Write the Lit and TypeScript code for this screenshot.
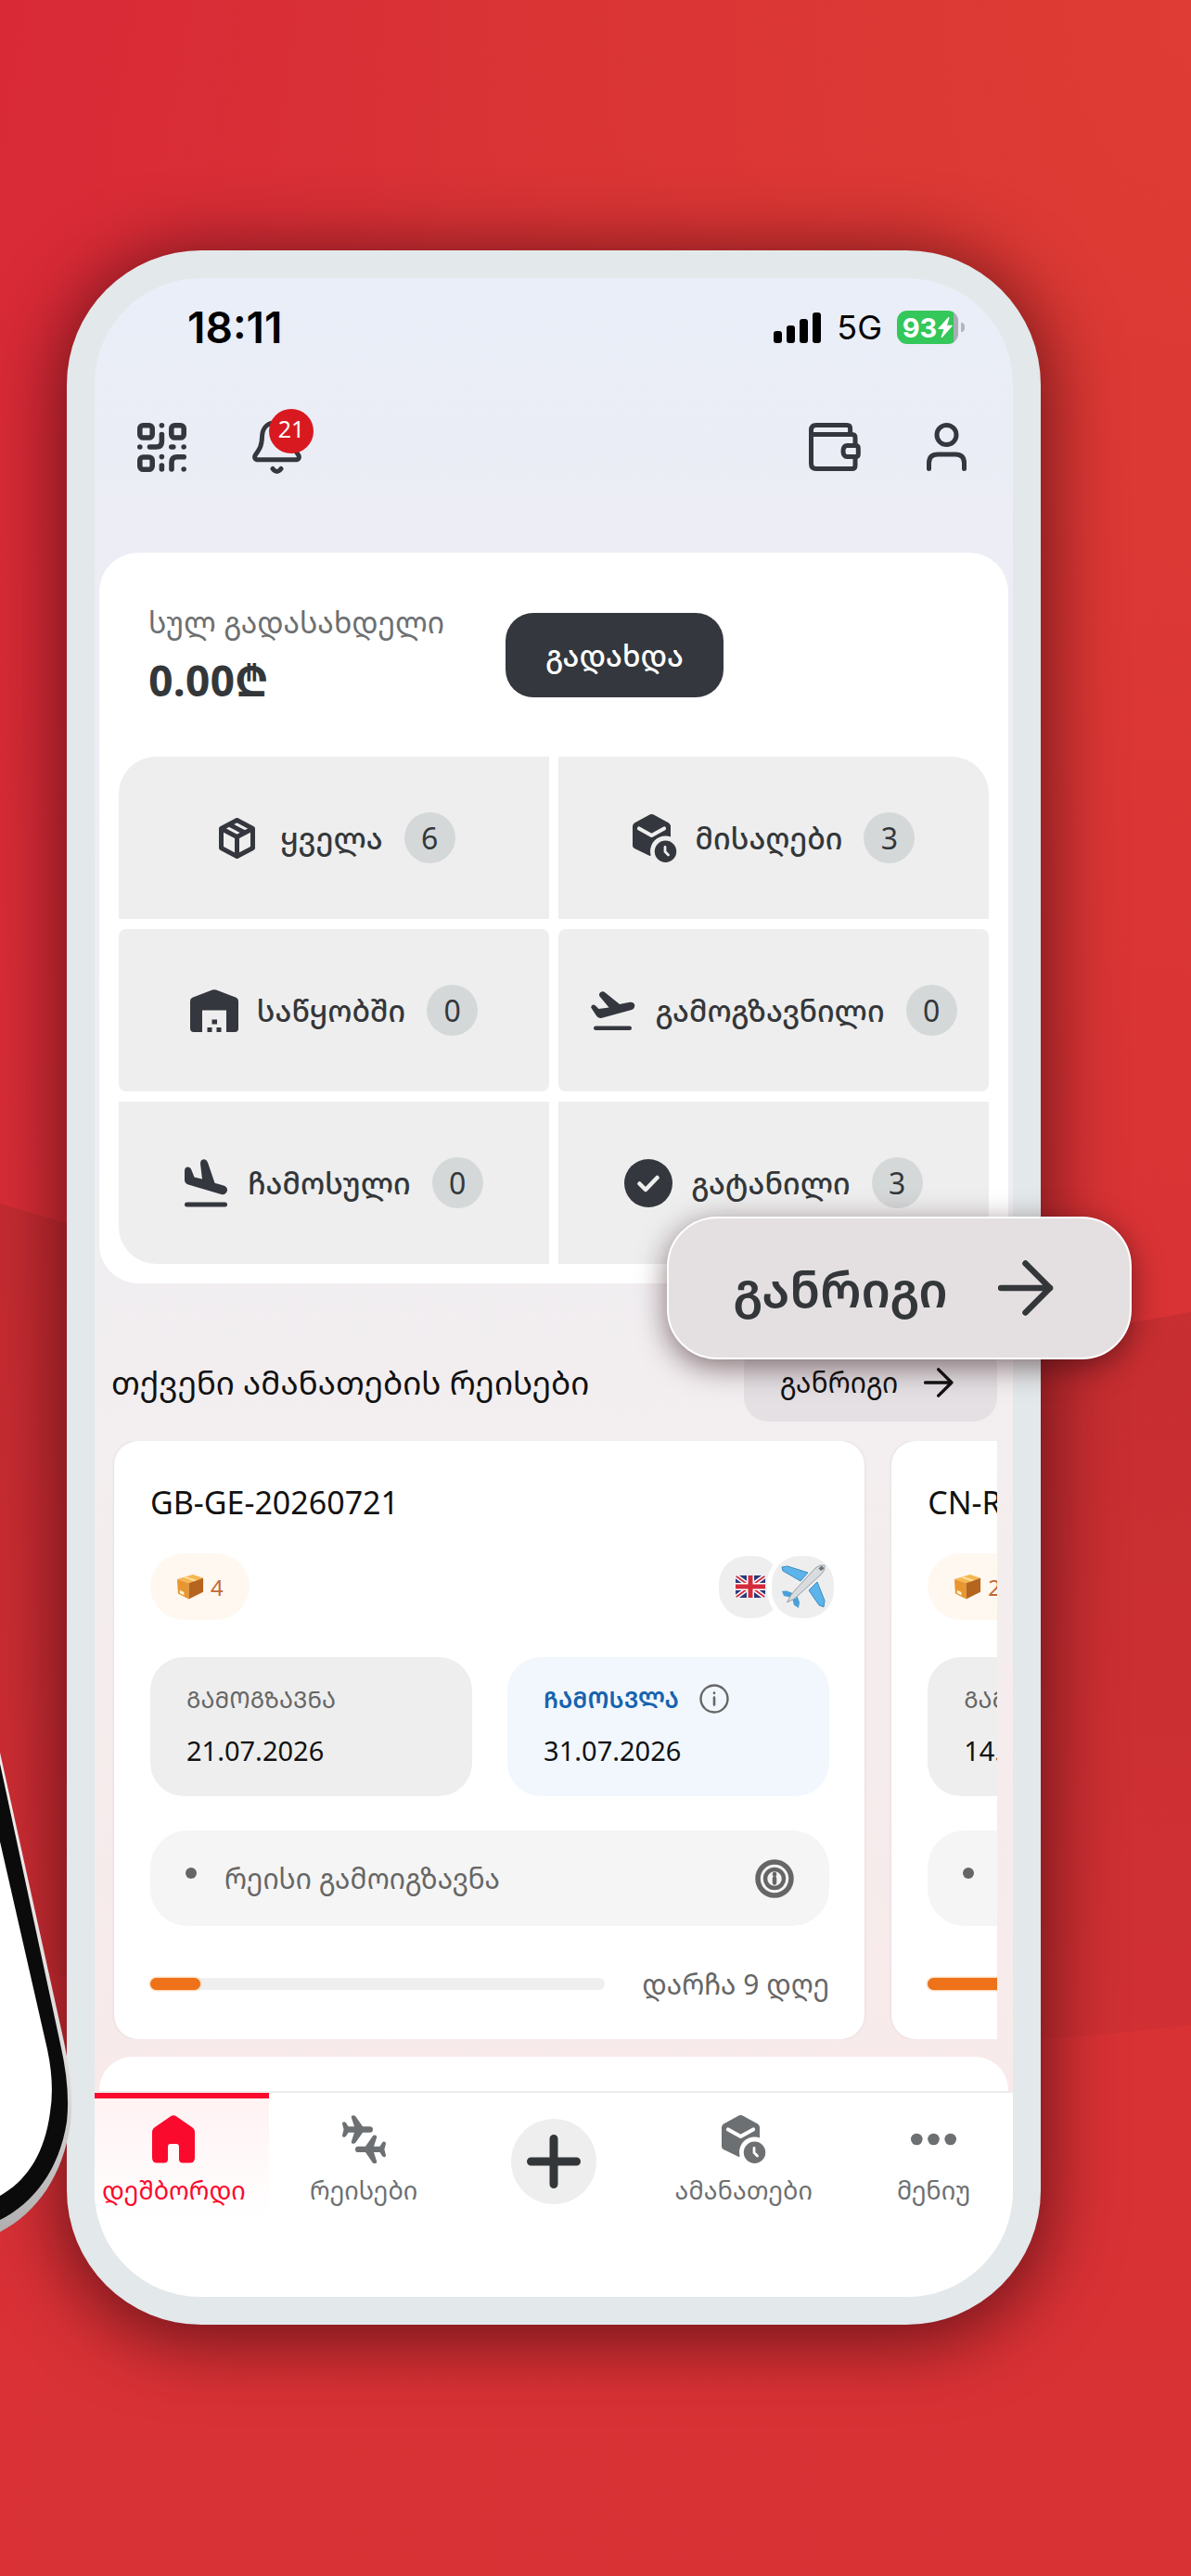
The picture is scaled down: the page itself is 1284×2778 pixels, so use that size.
import { LitElement, html, css, svg, nothing } from "lit";
import { customElement, property } from "lit/decorators.js";

const PLANE =
  "M30 12.3H22L14.5 1.5Q12.5-.8 10.2.8 9.5 1.5 10 3L13 12.3H6.5L4 8.3Q2.5 6.5.8 7.5-.2 8 .2 10L1.6 15.5.2 21Q-.2 23 .8 23.5 2.5 24.5 4 22.7L6.5 18.7H13L10 28Q9.5 29.5 10.2 30.2 12.5 31.8 14.5 29.5L22 18.7H30Q33 18.5 33 15.5 33 12.5 30 12.3Z";

const ICONS: Record<string, { w: number; h: number; body: unknown }> = {
  qr: {
    w: 53, h: 53,
    body: svg`<g fill="none" stroke="currentColor" stroke-width="5.6" stroke-linecap="round" stroke-linejoin="round">
      <rect x="2.8" y="2.8" width="13.4" height="13.2" rx="3.5"/><rect x="36.8" y="2.8" width="13.4" height="13.2" rx="3.5"/>
      <rect x="2.8" y="37" width="13.4" height="13.2" rx="3.5"/>
      <path d="M26.4 2.8h.01M26.4 12.5V20q0 6-6 6H13.5M2.8 26h.01M36.8 26h2M50.2 26h.01M26.4 36.6h.01M26.4 46v4M50.2 36.8H43q-6 0-6 6V50M50.2 50h.01"/></g>`,
  },
  bell: {
    w: 53, h: 58,
    body: svg`<g fill="none" stroke="currentColor" stroke-width="5" stroke-linecap="round" stroke-linejoin="round">
      <path d="M26.5 2.5C16 2.5 11 9 10.6 17 10.3 28 8 31 3.5 37.5 1.5 40.5 3.2 42.8 6 42.8H47C49.8 42.8 51.5 40.5 49.5 37.5 45 31 42.7 28 42.4 17 42 9 37 2.5 26.5 2.5Z"/>
      <path d="M22 52.5Q26.5 58.5 31 52.5"/></g>`,
  },
  wallet: {
    w: 56, h: 52,
    body: svg`<g fill="none" stroke="currentColor" stroke-width="5" stroke-linejoin="round" stroke-linecap="round">
      <path d="M44.6 12.5V6q0-3.5-3.5-3.5H8Q2.5 2.5 2.5 8V44q0 5.5 5.5 5.5H46.5Q50 49.5 50 46V38M50 24V16q0-3.5-3.5-3.5H3"/>
      <path d="M41 24.5H50.5Q53.3 24.5 53.3 27.5V33.5Q53.3 36.5 50.5 36.5H41Q37 36 37 30.5 37 25 41 24.5Z"/></g>`,
  },
  user: {
    w: 43, h: 52,
    body: svg`<g fill="none" stroke="currentColor" stroke-width="5" stroke-linecap="round">
      <circle cx="21.5" cy="13" r="10.5"/><path d="M2.5 49.5V43.5Q2.5 34 12 34H31Q40.5 34 40.5 43.5V49.5"/></g>`,
  },
  box: {
    w: 53, h: 44,
    body: svg`<g transform="translate(7)" fill="none" stroke="currentColor" stroke-width="5" stroke-linejoin="round">
      <path d="M19.5 2.5 36.5 11.5V32.5L19.5 41.5 2.5 32.5V11.5ZM2.5 11.5 19.5 20.5 36.5 11.5M19.5 20.5V41.5M11 7 28 16"/></g>`,
  },
  pending: {
    w: 48, h: 52,
    body: svg`<path fill="currentColor" d="M17.5 1Q20.5-.8 23.5 1L39 9.5Q41 11 41 13V34L18.5 45 2 37Q0 36 0 34V13Q0 11 2 9.5Z"/>
      <path d="M7 15.5 20.5 23 34 15.5" fill="none" stroke="var(--surface)" stroke-width="4.2" stroke-linecap="round" stroke-linejoin="round"/>
      <circle cx="35.5" cy="40" r="16.5" fill="var(--surface)"/><circle cx="35.5" cy="40.3" r="11.7" fill="currentColor"/>
      <path d="M35 35.5V40.5L38.5 44" fill="none" stroke="var(--surface)" stroke-width="2.8" stroke-linecap="round"/>`,
  },
  warehouse: {
    w: 52, h: 46,
    body: svg`<path fill="currentColor" d="M24 .6Q26-.3 28 .6L49.5 8.8Q52 10 52 12.5V42Q52 46 48 46H39V22.5H13V46H4Q0 46 0 42V12.5Q0 10 2.5 8.8Z"/>
      <path fill="currentColor" d="M23.5 32.5h5.5v5h-5.5zM18.5 41h5v5h-5zM28.5 41h5v5h-5z"/>`,
  },
  takeoff: {
    w: 50, h: 42,
    body: svg`<g transform="translate(1)"><path fill="currentColor" d="M.2 17.5Q0 15 2.5 14.5 4.5 14.3 5.5 16L8.5 19 19.5 17.5 9.5 5.5Q8 3 10.5 1 13-.6 15.5 1.5L31 14 42 11.8Q46.5 11.5 47.2 15 47.5 18.5 44 20L12 28.7Q8 29.7 6 26.5Z"/>
      <rect x="3" y="37.5" width="41" height="4.5" rx="2.2" fill="currentColor"/></g>`,
  },
  landing: {
    w: 48, h: 52,
    body: svg`<path fill="currentColor" d="M0 13Q0 8.5 3.5 8.5 6.5 8.7 7.5 12L10.5 19.5 19 21.5 17 5Q17 .5 20.5.2 24 .2 25.3 4.5L32.5 25.7 42 28.5Q46.5 30.2 46 34 44.5 39 39.5 38L4 27.5Q0 26 0 22.5Z"/>
      <rect y="46.5" width="46" height="5" rx="2.5" fill="currentColor"/>`,
  },
  check: {
    w: 52, h: 52,
    body: svg`<circle cx="26" cy="26" r="26" fill="currentColor"/><path d="M16.5 26.5 23 33 35.5 20" fill="none" stroke="var(--surface)" stroke-width="4.5" stroke-linecap="round" stroke-linejoin="round"/>`,
  },
  arrow: {
    w: 60, h: 60,
    body: svg`<path d="M3 30H56M29.5 3.5 56 30 29.5 56.5" fill="none" stroke="currentColor" stroke-width="6.5" stroke-linecap="round" stroke-linejoin="round"/>`,
  },
  home: {
    w: 46, h: 52,
    body: svg`<path fill="currentColor" d="M20 1.2Q23-.8 26 1.2L43 13Q46 15 46 18.5V46Q46 51.5 40.5 51.5H33Q29 51.5 29 47.5V34Q29 31 26 31H20Q17 31 17 34V47.5Q17 51.5 13 51.5H5.5Q0 51.5 0 46V18.5Q0 15 3 13Z"/>`,
  },
  flights: {
    w: 47, h: 52,
    body: svg`<path fill="currentColor" d="${PLANE}"/><path fill="currentColor" transform="rotate(180 23.5 26.2)" d="${PLANE}"/>`,
  },
  dots: {
    w: 49, h: 52,
    body: svg`<g fill="currentColor"><circle cx="6.3" cy="26" r="6.3"/><circle cx="24.5" cy="26" r="6.3"/><circle cx="42.7" cy="26" r="6.3"/></g>`,
  },
  plus: {
    w: 58, h: 58,
    body: svg`<path d="M29 4.5V53.5M4.5 29H53.5" stroke="currentColor" stroke-width="9" stroke-linecap="round"/>`,
  },
  info: {
    w: 32, h: 32,
    body: svg`<circle cx="16" cy="16" r="14.5" fill="none" stroke="currentColor" stroke-width="2.4"/><path d="M16 14.5V22.5M16 9.5v.5" stroke="currentColor" stroke-width="2.6" stroke-linecap="round"/>`,
  },
  target: {
    w: 42, h: 42,
    body: svg`<circle cx="21" cy="21" r="18" fill="none" stroke="currentColor" stroke-width="5.5"/><circle cx="21" cy="21" r="10" fill="none" stroke="currentColor" stroke-width="4.5"/><path d="M21 20.5V25.500M21 16v.5" stroke="currentColor" stroke-width="4.500" stroke-linecap="round"/>`,
  },
  parcel: {
    w: 32, h: 32,
    body: svg`<path fill="#f6b651" d="M1 7.5 19 2 31 6 14.5 12Z"/><path fill="#e8962f" d="M1 7.5 14.5 12V30.5L2 24Z"/><path fill="#b5651d" d="M14.5 12 31 6V22L14.5 30.5Z"/>
      <path fill="#ffdf9a" d="M8 5.5 11.5 4.4 24 8.5 20.5 9.8Z"/><path fill="#fff1cf" d="M4 20l5 2.5v3.5l-5-2.5z"/>`,
  },
  flag: {
    w: 32, h: 24,
    body: svg`<rect width="32" height="24" rx="3" fill="#2b3a78"/><path d="M1 1 31 23M31 1 1 23" stroke="#fff" stroke-width="5"/><path d="M1 1 31 23M31 1 1 23" stroke="#d42a3c" stroke-width="1.8"/>
      <path d="M16 0V24M0 12H32" stroke="#fff" stroke-width="8"/><path d="M16 0V24M0 12H32" stroke="#d42a3c" stroke-width="5"/>`,
  },
  airplane: {
    w: 48, h: 48,
    body: svg`<path fill="#5db4ea" stroke="#3b8cc4" stroke-width="1" d="M1 3 7 2 29 9 21 18 2 7ZM46 46 47 39 39 19 30 28 41 44Z"/>
      <path fill="#4b9fd6" d="M1 29 6 28.5 15 32 16 37 3 34ZM19 47 20 41 17 33 11 33 14 44Z"/>
      <path fill="#d9dcdf" stroke="#9a9fa6" stroke-width="1" d="M47 1Q41 0 37 4L15 28Q10 33 6.5 41 14.5 38 19 33L43 11Q48 7 47 1Z"/><path fill="#6b7178" d="M43 2Q46 2 46 5L43 7 40.5 4.5Z"/>`,
  },
  signal: {
    w: 52, h: 33,
    body: svg`<rect y="20" width="9" height="13" rx="3"/><rect x="14" y="14" width="9" height="19" rx="3"/><rect x="28" y="7" width="9" height="26" rx="3"/><rect x="42" width="9" height="33" rx="3"/>`,
  },
  bolt: {
    w: 16, h: 22,
    body: svg`<path fill="#fff" d="M11.5 0 .3 12.2Q0 13 .8 13H6.5L3.5 21.5Q4 22.5 5 21.7L15.7 9.6Q16 8.8 15 8.7H10L12.5.8Q12.3-.2 11.5 0Z"/>`,
  },
};

@customElement("ui-icon")
class UiIcon extends LitElement {
  @property() name = "box";
  @property({ type: Number }) size = 0;
  static styles = css`
    :host { display: block; flex: none; line-height: 0; }
    svg { display: block; }
  `;
  render() {
    const i = ICONS[this.name];
    const w = this.size || i.w;
    return html`<svg width=${w} height=${Math.round((w * i.h) / i.w)} viewBox="0 0 ${i.w} ${i.h}" aria-hidden="true">${i.body}</svg>`;
  }
}

interface Flight {
  code: string; parcels: number; depart: string; arrive: string; status: string; progress: number; left: string;
}

@customElement("flight-card")
class FlightCard extends LitElement {
  @property({ attribute: false }) flight!: Flight;
  static styles = css`
    :host { display: block; flex: none; width: 85%; box-sizing: border-box; background: #fff; border-radius: 26px;
      padding: 36px 38px 30px 39px; box-shadow: 0 0 3px rgba(60, 30, 30, 0.12); }
    .title { margin: 0 0 25px; font-size: 34px; line-height: 60px; font-weight: 400; color: #111; }
    .row { display: flex; align-items: center; justify-content: space-between; margin-bottom: 40px; }
    .pill { display: flex; align-items: center; gap: 7px; height: 72px; padding: 0 28px; border-radius: 36px; background: #fff8f1; color: #c2693a;
      font-size: 24px; }
    .modes { display: flex; margin-right: -5px; }
    .mode { width: 67px; height: 67px; border-radius: 30px; background: #eee; display: flex; align-items: center; justify-content: center; }
    .mode + .mode { margin-left: -10px; box-shadow: 0 0 0 5px #fff; }
    .dates { display: grid; grid-template-columns: 1fr 1fr; gap: 38px; margin-bottom: 37px; }
    .date { background: #eee; border-radius: 36px; height: 150px; box-sizing: border-box; padding: 25px 39px; color: #111; font-size: 29px; line-height: 50px; }
    .date.in { background: #f1f7fd; }
    .lab { display: flex; align-items: center; gap: 22px; height: 40px; margin-bottom: 11px; font-size: 25px; color: #666; }
    .in .lab { color: #1763ad; font-weight: 600; }
    .lab ui-icon { color: #666; }
    .status { display: flex; align-items: center; height: 103px; border-radius: 40px; background: #f5f5f5; padding: 0 38px; margin-bottom: 32px;
      font-size: 30px; color: #666; white-space: nowrap; }
    .dot { width: 12px; height: 12px; border-radius: 50%; background: #666; margin: 0 30px 12px 0; flex: none; }
    .status span { flex: 1; }
    .prog { display: flex; align-items: center; gap: 40px; height: 60px; font-size: 30px; color: #666; white-space: nowrap; }
    .track { flex: 1; height: 13px; border-radius: 7px; background: #efefef; }
    .fill { height: 13px; border-radius: 7px; background: #ee7219; box-shadow: 0 0 3px #f9a04f; }
  `;
  render() {
    const f = this.flight;
    return html`
      <h3 class="title">${f.code}</h3>
      <div class="row">
        <div class="pill"><ui-icon name="parcel" size="30"></ui-icon>${f.parcels}</div>
        <div class="modes"><div class="mode"><ui-icon name="flag"></ui-icon></div><div class="mode"><ui-icon name="airplane"></ui-icon></div></div>
      </div>
      <div class="dates">
        <div class="date"><div class="lab">ᲒᲐᲛᲝᲒᲖᲐᲕᲜᲐ</div>${f.depart}</div>
        <div class="date in"><div class="lab">ᲩᲐᲛᲝᲡᲕᲚᲐ<ui-icon name="info"></ui-icon></div>${f.arrive}</div>
      </div>
      <div class="status"><i class="dot"></i><span>${f.status}</span><ui-icon name="target"></ui-icon></div>
      <div class="prog"><div class="track"><div class="fill" style="width:${f.progress}%"></div></div>${f.left}</div>
    `;
  }
}

@customElement("app-root")
class AppRoot extends LitElement {
  static styles = css`
    :host { display: block; position: relative; overflow: hidden; min-height: 100vh; box-sizing: border-box; padding: 270px 162px 271px 72px;
      font-family: "Noto Sans Georgian", "Noto Sans", "DejaVu Sans", sans-serif; color: #34373a; --surface: #eee;
      background: radial-gradient(ellipse 900px 1500px at 100% 0, #de3c34, rgba(222, 60, 52, 0)), linear-gradient(100deg, #d92937 0%, #d93236 30%, #d93235 100%); }
    button { font: inherit; color: inherit; border: 0; padding: 0; margin: 0; background: none; cursor: pointer; }
    a { color: inherit; text-decoration: none; }
    .backdrop { position: absolute; inset: 0; width: 100%; height: 100%; }
    .device { position: absolute; left: 0; top: 1880px; }
    .phone { position: relative; background: #e3e8ea; border-radius: 145px; padding: 30px; box-shadow: 0 10px 76px 10px rgba(50, 5, 12, 0.62); }
    .screen { border-radius: 114px; overflow: hidden; background: linear-gradient(#e9eef8 0, #ecedf5 12%, #efeef3 40%, #f3eeef 58%, #f8eaea 90%); }
    .statusbar { display: flex; align-items: center; height: 104px; padding: 2px 52px 0 100px; box-sizing: border-box; color: #000; font-family: Inter, sans-serif; }
    .time { flex: 1; font-size: 46px; font-weight: 600; }
    .net { font-size: 36px; margin: 0 16px; }
    .battery { display: flex; align-items: center; justify-content: center; gap: 1px; width: 66px; height: 36px; border-radius: 11px; color: #fff; font-size: 29px; font-weight: 700;
      background: linear-gradient(90deg, #34c759 93%, #a9aeb4 93%); }
    .nub { width: 4px; height: 10px; margin-left: 3px; border-radius: 0 4px 4px 0; background: #b3b6bd; }
    .top { display: flex; align-items: center; height: 156px; padding: 0 50px 0 46px; margin-bottom: 36px; gap: 71px; color: #34373d; }
    .space { flex: 1; }
    .bell { position: relative; }
    .count { position: absolute; left: 18px; top: -12px; width: 48px; height: 48px; border-radius: 50%; background: #d91920; color: #fff; font-size: 25px; line-height: 42px; text-align: center; }
    .card { margin: 0 5px 64px; background: #fff; border-radius: 42px; padding: 65px 21px 21px; }
    .balance { display: flex; align-items: center; height: 91px; margin: 0 32px 64px; }
    .owed { min-width: 385px; margin: 0; }
    .owed dt { font-size: 32px; font-weight: 400; line-height: 44px; padding-bottom: 8px; color: #6d6f71; white-space: nowrap; }
    .owed dd { margin: 0; font-size: 46px; line-height: 64px; font-weight: 700; }
    .pay { background: #34373d; color: #fff; border-radius: 30px; height: 91px; padding: 0 43px; font-size: 32px; font-weight: 500; }
    .tiles { display: grid; grid-template-columns: 1fr 1fr; gap: 11px 10px; border-radius: 40px; overflow: hidden; }
    .tile { display: flex; align-items: center; justify-content: center; height: 175px; background: #eee; font-size: 32px; font-weight: 500; white-space: nowrap; }
    .tile:nth-child(3), .tile:nth-child(4) { border-radius: 8px; }
    .tile ui-icon { margin-right: 20px; color: #34373d; }
    .num { width: 55px; height: 55px; line-height: 55px; border-radius: 50%; background: #d5d8d9; margin-left: 23px; font-weight: 400; }
    .head { display: flex; align-items: center; justify-content: space-between; margin: 0 17px 21px 18px; height: 85px; color: #111; }
    .head h2 { margin: 0; font-size: 35px; font-weight: 400; white-space: nowrap; }
    .sched { display: flex; align-items: center; gap: 28px; height: 85px; width: 273px; justify-content: center; padding-right: 8px; box-sizing: border-box; border-radius: 26px; background: #e4e0e4; font-size: 30px; }
    .rail { display: flex; gap: 29px; overflow: hidden; margin: 0 17px 19px 0; padding-left: 21px; }
    .peek { height: 37px; margin: 0 5px; background: #fff; border-radius: 36px 36px 0 0; }
    nav { display: grid; grid-template-columns: repeat(5, 1fr); border-top: 2px solid #ececec; background: #fff; height: 220px; margin: 0 -17px; --surface: #fff; }
    .item { display: flex; flex-direction: column; align-items: center; height: 134px; box-sizing: border-box; padding-top: 24px; color: #6d7072; font-size: 27px; line-height: 34px; gap: 12px; }
    .item.on { color: #fa0a2d; padding-top: 18px; border-top: 6px solid #fa0a2d; background: linear-gradient(#fff2f3, #fff); }
    .add { width: 92px; height: 92px; border-radius: 50%; background: #eee; color: #34373a; display: flex; align-items: center; justify-content: center; margin: 28px auto 0; }
    .callout { position: absolute; right: -98px; top: 1042px; width: 501px; height: 154px; box-sizing: border-box; border: 2px solid #fff; border-radius: 54px; background: #e4e0e1;
      display: flex; align-items: center; justify-content: center; gap: 54px; padding-right: 13px; font-size: 53px; font-weight: 600; box-shadow: 0 8px 32px rgba(40, 10, 15, 0.55); }
  `;

  private tiles = [
    ["box", "ყველა", 6], ["pending", "მისაღები", 3], ["warehouse", "საწყობში", 0],
    ["takeoff", "გამოგზავნილი", 0], ["landing", "ჩამოსული", 0], ["check", "გატანილი", 3],
  ] as const;

  private flights: Flight[] = [
    { code: "GB-GE-20260721", parcels: 4, depart: "21.07.2026", arrive: "31.07.2026", status: "რეისი გამოიგზავნა", progress: 11, left: "დარჩა 9 დღე" },
    { code: "CN-R", parcels: 2, depart: "14.07.2026", arrive: "", status: "", progress: 60, left: "" },
  ];

  private nav(icon: string, label: string, on = false) {
    return html`<a href="#${icon}" class="item ${on ? "on" : ""}" aria-current=${on ? "page" : nothing}><ui-icon name=${icon}></ui-icon>${label}</a>`;
  }

  render() {
    return html`
      <svg class="backdrop" viewBox="0 0 1284 2778" preserveAspectRatio="none" aria-hidden="true">
        <defs><linearGradient id="band" x1="0" y1="0" x2="0" y2="1"><stop offset="0" stop-color="#b82b2e" stop-opacity=".6"/><stop offset="1" stop-color="#b82b2e" stop-opacity=".25"/></linearGradient></defs>
        <path fill="url(#band)" d="M0 1298Q340 1400 640 1440T1284 1415V2184Q900 2230 500 2190T0 2112Z"/>
      </svg>
      <div class="phone">
        <div class="screen">
          <div class="statusbar">
            <span class="time">18:11</span><ui-icon name="signal"></ui-icon><span class="net">5G</span>
            <span class="battery">93<ui-icon name="bolt"></ui-icon></span><i class="nub"></i>
          </div>
          <div class="top">
            <button aria-label="QR"><ui-icon name="qr"></ui-icon></button>
            <button class="bell"><ui-icon name="bell"></ui-icon><span class="count">21</span></button>
            <span class="space"></span>
            <button aria-label="საფულე"><ui-icon name="wallet"></ui-icon></button>
            <button aria-label="პროფილი"><ui-icon name="user"></ui-icon></button>
          </div>
          <section class="card">
            <div class="balance">
              <dl class="owed"><dt>სულ გადასახდელი</dt><dd>0.00₾</dd></dl>
              <button class="pay">გადახდა</button>
            </div>
            <div class="tiles">
              ${this.tiles.map(([icon, label, n]) => html`<button class="tile"><ui-icon name=${icon}></ui-icon>${label}<span class="num">${n}</span></button>`)}
            </div>
          </section>
          <div class="head"><h2>თქვენი ამანათების რეისები</h2><button class="sched">განრიგი<ui-icon name="arrow" size="32"></ui-icon></button></div>
          <div class="rail">${this.flights.map((f) => html`<flight-card .flight=${f}></flight-card>`)}</div>
          <div class="peek"></div>
          <nav>
            ${this.nav("home", "დეშბორდი", true)}${this.nav("flights", "რეისები")}
            <button class="add" aria-label="დამატება"><ui-icon name="plus"></ui-icon></button>
            ${this.nav("pending", "ამანათები")}${this.nav("dots", "მენიუ")}
          </nav>
        </div>
        <button class="callout">განრიგი<ui-icon name="arrow"></ui-icon></button>
      </div>
      <svg class="device" width="80" height="540" viewBox="0 0 80 540" aria-hidden="true">
        <defs><linearGradient id="rim" x1="0" y1="0" x2="0" y2="1"><stop offset="0" stop-color="#f4eeee"/><stop offset=".7" stop-color="#dcd9d9"/><stop offset="1" stop-color="#b0aeae"/></linearGradient></defs>
        <path fill="url(#rim)" d="M0 10 69 322Q80 372 76 410C68 466 40 506 0 527Z"/>
        <path fill="#0b0b0b" d="M0 22 65 324Q76 372 72 408C64 460 36 496 0 514Z"/>
        <path fill="#fff" d="M0 106 51 330Q59 368 54 398C48 444 28 472 0 488Z"/>
      </svg>
    `;
  }
}
